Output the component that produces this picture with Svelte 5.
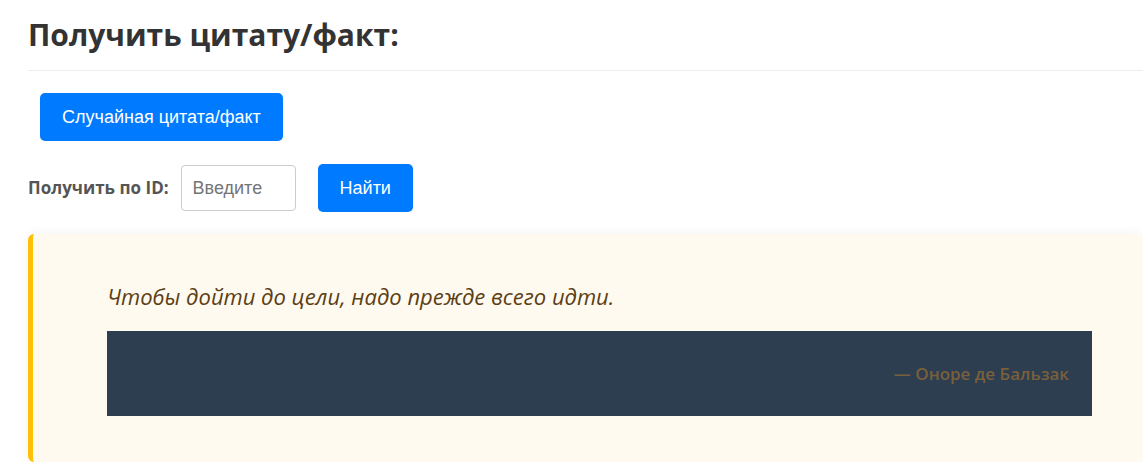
<script>
  let quoteId = $state('');
</script>

<main>
  <h2>Получить цитату/факт:</h2>
  <button type="button" class="random">Случайная цитата/факт</button>
  <form onsubmit={(e) => e.preventDefault()}>
    <label for="quote-id">Получить по ID:</label>
    <input id="quote-id" type="text" placeholder="Введите" bind:value={quoteId} />
    <button type="submit">Найти</button>
  </form>
  <section>
    <blockquote>
      <p>Чтобы дойти до цели, надо прежде всего идти.</p>
      <footer>— Оноре де Бальзак</footer>
    </blockquote>
  </section>
</main>

<style>
  :global(body) {
    background: #fff;
    overflow: hidden;
  }
  main {
    padding: 12px 0 0 28px;
    font-family: "Segoe UI", "Open Sans", "Noto Sans", sans-serif;
    color: #333;
  }
  h2 {
    margin: 0 0 22px;
    padding-bottom: 12px;
    border-bottom: 1px solid #eee;
    font-size: 30px;
    line-height: 46px;
    font-weight: 700;
  }
  button {
    height: 48px;
    padding: 0 22px;
    border: 0;
    border-radius: 5px;
    background: #007bff;
    color: #fff;
    font: 18px "Liberation Sans", Arial, sans-serif;
    cursor: pointer;
  }
  .random {
    display: block;
    margin-left: 12px;
  }
  form {
    display: flex;
    align-items: center;
    margin: 23px 0 22px;
  }
  label {
    font-size: 17px;
    line-height: 24px;
    font-weight: 700;
    color: #555;
  }
  input {
    box-sizing: border-box;
    width: 115px;
    height: 46px;
    margin: 0 22px 0 12px;
    padding: 0 11px;
    border: 1px solid #ccc;
    border-radius: 4px;
    font: 18px "Liberation Sans", Arial, sans-serif;
  }
  input::placeholder {
    color: #757575;
  }
  section {
    padding: 46px 51px 46px 74px;
    border-left: 5px solid #ffc107;
    border-radius: 6px;
    background: #fffaf0;
    box-shadow: 0 0 12px rgba(0, 0, 0, 0.06);
  }
  blockquote {
    margin: 0;
  }
  p {
    margin: 0 0 19px;
    font-size: 22px;
    line-height: 32px;
    font-style: italic;
    color: #5c4015;
  }
  footer {
    padding: 28px 23px;
    background: #2c3e50;
    color: #7a5f3c;
    font-size: 17px;
    line-height: 29px;
    font-weight: 600;
    text-align: right;
  }
</style>
